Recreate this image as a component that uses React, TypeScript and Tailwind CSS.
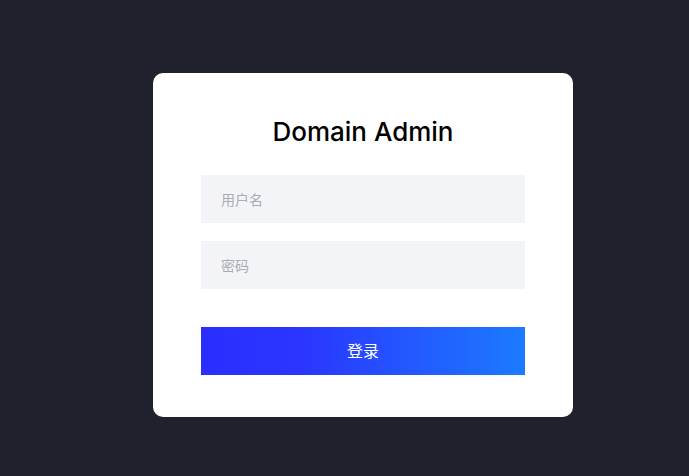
export default function App() {
  return (
    <div className="min-h-[476px] w-full bg-[#1f222c] pt-[73px]" style={{ fontFamily: '"Noto Sans", "Noto Sans CJK SC", sans-serif' }}>
      <div className="ml-[153px] w-[420px] rounded-[10px] bg-white px-[48px] pt-[40px] pb-[42px]">
        <h1
          className="h-[36px] text-center text-[26px] leading-[38px] font-medium text-black"
          style={{ fontFamily: 'Inter, "Noto Sans", sans-serif' }}
        >
          Domain Admin
        </h1>
        <input
          placeholder="用户名"
          className="mt-[26px] block h-[48px] w-full bg-[#f3f4f7] px-[20px] text-[14px] text-gray-700 outline-none placeholder:text-[#a9acb2]"
        />
        <input
          type="password"
          placeholder="密码"
          className="mt-[18px] block h-[48px] w-full bg-[#f3f4f7] px-[20px] text-[14px] text-gray-700 outline-none placeholder:text-[#a9acb2]"
        />
        <button className="mt-[38px] block h-[48px] w-full bg-[linear-gradient(90deg,#2a2eff_0%,#2b35ff_30%,#1b7bff_100%)] text-[16px] text-white">
          登录
        </button>
      </div>
    </div>
  );
}
